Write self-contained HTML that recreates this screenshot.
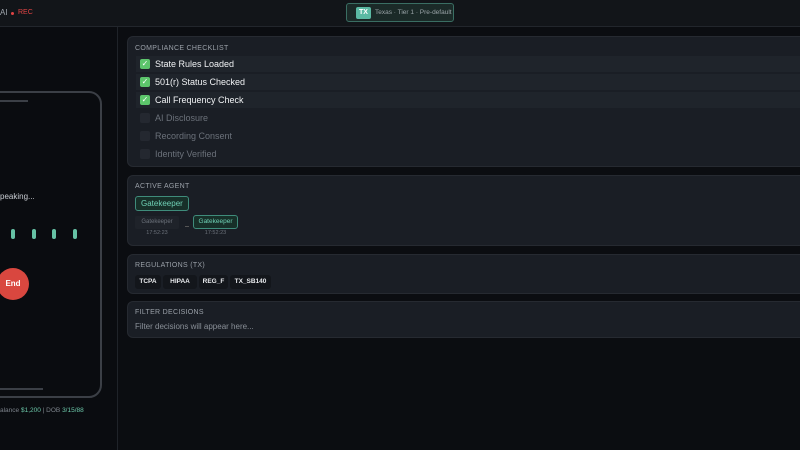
<!DOCTYPE html>
<html><head><style>
*{margin:0;padding:0;box-sizing:border-box}
body{width:800px;height:450px;overflow:hidden;background:#0b0d11;font-family:"Liberation Sans",sans-serif;position:relative;color:#e6e8eb}
.hdr{position:absolute;left:0;top:0;width:800px;height:27px;background:#121519;border-bottom:1px solid #22262c}
.left{position:absolute;left:0;top:27px;width:118px;height:423px;background:#0a0c10;border-right:1px solid #1f2329}
.phone{position:absolute;left:-60px;top:64px;width:162px;height:307px;border:2px solid #3b3f46;border-radius:13px}
.card{position:absolute;left:127px;width:690px;background:#1a1e25;border:1px solid #262a31;border-radius:6px}
.ttl{position:absolute;left:7px;font-size:7px;color:#9aa0a8;letter-spacing:.3px}
.row{position:absolute;left:8px;width:690px;height:16px;font-size:9px;line-height:16px;padding-left:19px}
.row.on{background:#1f242b;color:#f0f2f4}
.row.off{color:#6b717a}
.cb{position:absolute;left:4px;top:3px;width:10px;height:10px;border-radius:2px}
.on .cb{background:#5cc56b;color:#fff;font-size:8px;line-height:10px;text-align:center}
.off .cb{background:#242830}
.tag{position:absolute;top:20px;height:14px;background:#13161b;border-radius:3px;font-size:6.5px;font-weight:bold;line-height:14px;text-align:center;color:#e8eaed}
</style></head><body>
<div class="hdr">
<span style="position:absolute;left:0;top:8px;font-size:8px;color:#a0a6ad">AI</span>
<span style="position:absolute;left:11px;top:12px;width:3px;height:3px;border-radius:50%;background:#e04444"></span>
<span style="position:absolute;left:18px;top:9px;font-size:7px;color:#e04444">REC</span>
<div style="position:absolute;left:346px;top:3px;width:108px;height:19px;border:1px solid #3a6e63;background:#1b2a28;border-radius:3px">
<span style="position:absolute;left:9px;top:3px;width:15px;height:12px;background:#5bb9a3;border-radius:2px;color:#fff;font-size:7px;font-weight:bold;text-align:center;line-height:12px">TX</span>
<span style="position:absolute;left:28px;top:5px;font-size:6.5px;color:#9aa4a8;white-space:nowrap">Texas · Tier 1 · Pre-default</span>
</div>
</div>
<div class="left">
<div class="phone"></div>
<div style="position:absolute;left:0;top:73px;width:28px;height:2px;background:#3b3f46"></div>
<div style="position:absolute;left:0;top:361px;width:43px;height:2px;background:#3b3f46"></div>
<div style="position:absolute;left:0;top:165px;font-size:8px;color:#c8ccd2">peaking...</div>
<div style="position:absolute;left:11px;top:202px;width:4px;height:10px;border-radius:2px;background:#66c2a5"></div>
<div style="position:absolute;left:32px;top:202px;width:4px;height:10px;border-radius:2px;background:#66c2a5"></div>
<div style="position:absolute;left:52px;top:202px;width:4px;height:10px;border-radius:2px;background:#66c2a5"></div>
<div style="position:absolute;left:73px;top:202px;width:4px;height:10px;border-radius:2px;background:#66c2a5"></div>
<div style="position:absolute;left:-3px;top:241px;width:32px;height:32px;border-radius:50%;background:#d9473f;color:#fff;font-size:8px;font-weight:bold;text-align:center;line-height:32px">End</div>
<div style="position:absolute;left:0;top:380px;font-size:6.5px;color:#7d838b;white-space:nowrap">alance <span style="color:#6cc7a9">$1,200</span> | DOB <span style="color:#6cc7a9">3/15/88</span></div>
</div>
<div class="card" style="top:36px;height:131px">
<div class="ttl" style="top:8px">COMPLIANCE CHECKLIST</div>
<div class="row on" style="top:19px"><span class="cb">✓</span>State Rules Loaded</div>
<div class="row on" style="top:37px"><span class="cb">✓</span>501(r) Status Checked</div>
<div class="row on" style="top:55px"><span class="cb">✓</span>Call Frequency Check</div>
<div class="row off" style="top:73px"><span class="cb"></span>AI Disclosure</div>
<div class="row off" style="top:91px"><span class="cb"></span>Recording Consent</div>
<div class="row off" style="top:109px"><span class="cb"></span>Identity Verified</div>
</div>
<div class="card" style="top:175px;height:71px">
<div class="ttl" style="top:7px">ACTIVE AGENT</div>
<div style="position:absolute;left:7px;top:20px;height:15px;padding:0 5px;border:1px solid #3f8c7b;background:#173029;border-radius:3px;color:#6fd0b5;font-size:8px;line-height:13px">Gatekeeper</div>
<div style="position:absolute;left:7px;top:40px;width:44px;height:13px;background:#1f232a;border-radius:2px;color:#6b717a;font-size:6px;text-align:center;line-height:13px">Gatekeeper</div>
<div style="position:absolute;left:7px;top:54px;width:44px;color:#6b717a;font-size:5.5px;text-align:center">17:52:23</div>
<div style="position:absolute;left:57px;top:50px;width:4px;height:1px;background:#555"></div>
<div style="position:absolute;left:65px;top:39px;width:45px;height:14px;border:1px solid #3f8c7b;background:#173029;border-radius:3px;color:#6fd0b5;font-size:6.5px;text-align:center;line-height:12px">Gatekeeper</div>
<div style="position:absolute;left:65px;top:54px;width:45px;color:#6b717a;font-size:5.5px;text-align:center">17:52:23</div>
</div>
<div class="card" style="top:254px;height:40px">
<div class="ttl" style="top:7px">REGULATIONS (TX)</div>
<span class="tag" style="left:7px;width:26px">TCPA</span>
<span class="tag" style="left:35px;width:34px">HIPAA</span>
<span class="tag" style="left:71px;width:29px">REG_F</span>
<span class="tag" style="left:102px;width:41px">TX_SB140</span>
</div>
<div class="card" style="top:301px;height:37px">
<div class="ttl" style="top:7px">FILTER DECISIONS</div>
<div style="position:absolute;left:7px;top:20px;font-size:8px;color:#8a9098">Filter decisions will appear here...</div>
</div>
</body></html>
